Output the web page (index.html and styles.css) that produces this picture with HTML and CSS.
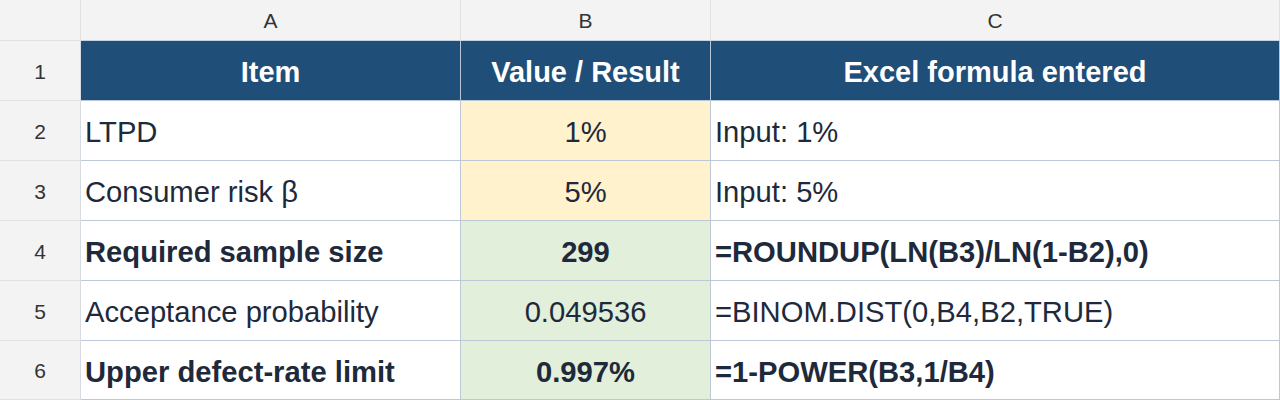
FILE: index.html
```html
<!DOCTYPE html>
<html>
<head>
<meta charset="utf-8">
<link rel="stylesheet" href="styles.css">
</head>
<body>
<div class="sheet">
  <div class="cell corner"></div>
  <div class="cell colhead">A</div>
  <div class="cell colhead">B</div>
  <div class="cell colhead lastcol">C</div>

  <div class="cell rowhead">1</div>
  <div class="cell head">Item</div>
  <div class="cell head">Value / Result</div>
  <div class="cell head lastcol">Excel formula entered</div>

  <div class="cell rowhead">2</div>
  <div class="cell data">LTPD</div>
  <div class="cell data center input">1%</div>
  <div class="cell data lastcol">Input: 1%</div>

  <div class="cell rowhead">3</div>
  <div class="cell data">Consumer risk β</div>
  <div class="cell data center input">5%</div>
  <div class="cell data lastcol">Input: 5%</div>

  <div class="cell rowhead">4</div>
  <div class="cell data bold">Required sample size</div>
  <div class="cell data center calc bold">299</div>
  <div class="cell data lastcol bold">=ROUNDUP(LN(B3)/LN(1-B2),0)</div>

  <div class="cell rowhead">5</div>
  <div class="cell data">Acceptance probability</div>
  <div class="cell data center calc">0.049536</div>
  <div class="cell data lastcol">=BINOM.DIST(0,B4,B2,TRUE)</div>

  <div class="cell rowhead">6</div>
  <div class="cell data bold">Upper defect-rate limit</div>
  <div class="cell data center calc bold">0.997%</div>
  <div class="cell data lastcol bold">=1-POWER(B3,1/B4)</div>
</div>
</body>
</html>
```

FILE: styles.css
```css
* { box-sizing: border-box; }
html, body { margin: 0; padding: 0; background: #ffffff; }
body { width: 1280px; height: 400px; overflow: hidden; font-family: "Liberation Sans", Arial, sans-serif; }

.sheet {
  display: grid;
  grid-template-columns: 81px 380px 250px 569px;
  grid-template-rows: 41px 60px 60px 60px 60px 60px 59px;
}

.cell {
  display: flex;
  align-items: center;
  border-right: 1px solid #bcc7d8;
  border-bottom: 1px solid #bcc7d8;
  white-space: nowrap;
  overflow: hidden;
}

.corner, .colhead, .rowhead {
  background: #f3f3f3;
  color: #333333;
  font-size: 21px;
  justify-content: center;
  padding-top: 2px;
  border-right: 1px solid #e0e0e0;
  border-bottom: 1px solid #e0e0e0;
}
.colhead { border-bottom-color: #c9d2df; }
.corner { border-bottom-color: #e0e0e0; }
.rowhead { border-right-color: #d6dbe2; }
.colhead.lastcol { border-right-color: #e0e0e0; }

.head {
  background: #1f4e79;
  color: #ffffff;
  font-weight: bold;
  font-size: 29px;
  justify-content: center;
  padding-top: 4px;
  border-right-color: #b8c6d9;
  border-bottom-color: #b8c6d9;
}

.data {
  font-size: 29.2px;
  color: #1e2a3b;
  padding-left: 4px;
  padding-top: 4px;
}
.center { justify-content: center; padding-left: 0; }
.input { background: #fff2cc; }
.calc { background: #e2efda; }
.bold { font-weight: bold; }
```
